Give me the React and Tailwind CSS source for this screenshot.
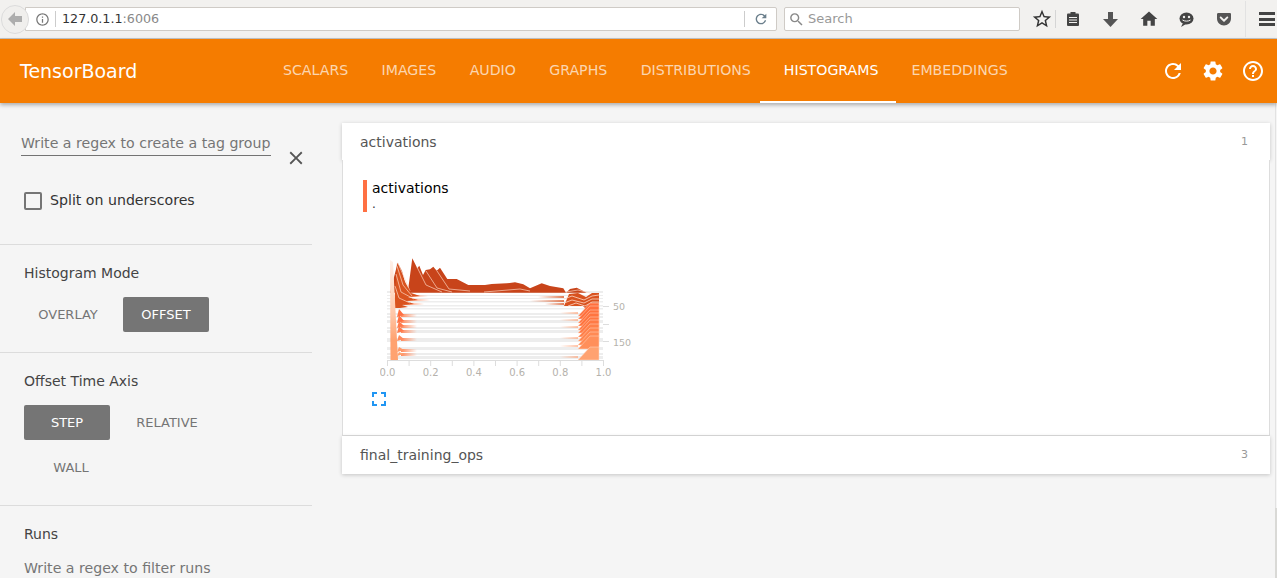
import { MdRefresh, MdSettings, MdHelpOutline, MdClose, MdFullscreen, MdSearch, MdInfoOutline, MdStarBorder, MdHome } from 'react-icons/md';
import { FaGetPocket } from 'react-icons/fa';

const FONT = 'font-["DejaVu_Sans",sans-serif]';

const tabs = [
  { name: 'SCALARS', cls: 'pl-[17px] pr-[16.7px]' },
  { name: 'IMAGES', cls: 'px-[16.7px]' },
  { name: 'AUDIO', cls: 'px-[16.7px]' },
  { name: 'GRAPHS', cls: 'px-[16.7px]' },
  { name: 'DISTRIBUTIONS', cls: 'pl-[16.7px] pr-[9px]' },
  { name: 'HISTOGRAMS', cls: 'pl-[24px] pr-[18px]' },
  { name: 'EMBEDDINGS', cls: 'pl-[15px] pr-[16.5px]' },
];

// grey stripes: [y, height]
const stripes = [
  [291, 2], [295, 1], [298, 1], [301, 1.5], [305, 1.5], [308, 1.5],
  [313, 2], [316, 2], [320, 3], [327, 2], [330, 3], [338, 4], [347, 3], [353, 2], [356, 3],
];

// left side lumps: [baseline, peak height, colour]
const leftRows = [
  [317, 8, '#ff7043'], [323, 8, '#ff7043'], [328, 7, '#ff7a4c'], [333, 7, '#ff7a4c'],
  [341, 6, '#ff8a5c'], [352, 5, '#ff9a6a'], [356, 4, '#ffa270'],
];

// right side blocks: [baseline, colour, has a faded tail]
const rightRows = [
  [316, '#ff6f3c', true], [319, '#ff6f3c', false], [323, '#ff723e', true], [326, '#ff743f', false],
  [330, '#ff7742', true], [333, '#ff7a45', false], [337, '#ff804a', false], [341, '#ff854f', true],
  [345, '#ff8a54', false], [349, '#ff8f5a', true], [360, '#ffa270', true],
];

function Chart() {
  return (
    <svg width="260" height="125" viewBox="380 255 260 125" className="block">
      <defs>
        <linearGradient id="wedge" x1="0" y1="0" x2="0" y2="1">
          <stop offset="0" stopColor="#fff1ea" />
          <stop offset="0.55" stopColor="#ffc5a6" />
          <stop offset="0.8" stopColor="#ffa270" />
          <stop offset="1" stopColor="#ffa270" />
        </linearGradient>
        <linearGradient id="fadeR" x1="0" y1="0" x2="1" y2="0">
          <stop offset="0" stopColor="#ff8a5c" />
          <stop offset="1" stopColor="#ff8a5c" stopOpacity="0" />
        </linearGradient>
        <linearGradient id="fadeL" x1="1" y1="0" x2="0" y2="0">
          <stop offset="0" stopColor="#ff9a6a" stopOpacity="0.6" />
          <stop offset="1" stopColor="#ff9a6a" stopOpacity="0" />
        </linearGradient>
        <linearGradient id="fadeDark" x1="1" y1="0" x2="0" y2="0">
          <stop offset="0" stopColor="#d8521f" stopOpacity="0.75" />
          <stop offset="1" stopColor="#d8521f" stopOpacity="0" />
        </linearGradient>
      </defs>

      {stripes.map(([y, h]) => (
        <rect key={y} x="387" y={y} width="216" height={h} fill="#ededed" />
      ))}

      {/* top series */}
      <path
        d="M390 292.7 L397.7 262.7 L402 271 L407.7 292.7 L412.3 258.3 L417.3 268.3 L419.3 265.7 L423 275 L425.7 270 L430 269.3 L433.3 266.7 L436.7 270.7 L440 267.7 L447.3 279 L456.7 279 L468.3 285 L485 285 L491.7 284 L506.7 283.3 L515 282.3 L523.3 284.3 L530 288.3 L541.7 283.3 L550 286 L563.3 288.3 L566 292.7 L570 289 L576.7 287.7 L586.7 292.7 Z"
        fill="#c8441a"
      />
      <g fill="none" stroke="#ffd9c7" strokeWidth="0.8" opacity="0.85">
        <path d="M397.7 262.7 L410 291" />
        <path d="M417 267 L426 285 L442 292" />
        <path d="M426 271 L437 288 L452 292" />
        <path d="M437 271 L449 289 L470 291" />
        <path d="M484 292 L520 289 L530 291" />
        <path d="M566 292 L578 290 L590 293" />
      </g>

      {/* dark rows on the left */}
      <rect x="404" y="295" width="24" height="2" fill="url(#fadeR)" />
      <rect x="404" y="299" width="26" height="2" fill="url(#fadeR)" />
      <rect x="404" y="303" width="20" height="2" fill="url(#fadeR)" />
      <path d="M394 308 L397 263 L404 280 L411 293 L420 296 L408 297 L418 300 L406 301 L414 304 L402 305 L408 307 L400 308 Z" fill="#d9531f" />
      <g fill="none" stroke="#ffd9c7" strokeWidth="0.8" opacity="0.85">
        <path d="M397 266 L403 285 L412 296" />
        <path d="M396 274 L401 292 L414 299" />
        <path d="M395 286 L399 298 L410 303" />
      </g>

      {/* dark rows on the right */}
      <rect x="538" y="296" width="26" height="2" fill="url(#fadeDark)" />
      <rect x="530" y="300" width="34" height="2" fill="url(#fadeDark)" />
      <rect x="545" y="303" width="19" height="2" fill="url(#fadeDark)" />
      <path d="M564 306 L569 294 L578 293 L586 297 L592 293 L599 293 L599 312 L589 312 L583 306 Z" fill="#d8521f" />
      <g fill="none" stroke="#ffd9c7" strokeWidth="0.8">
        <path d="M564 299 L572 296 L584 300 L592 296 L599 295" />
        <path d="M564 303 L572 300 L584 303 L592 299 L599 299" />
        <path d="M568 306 L576 303 L585 306 L592 302 L599 302" />
      </g>

      {/* offset rows */}
      {rightRows.map(([y, c, tail]) => (
        <g key={y}>
          {tail && <rect x="560" y={y - 4} width="18" height="2" fill="url(#fadeL)" />}
          <path d={`M578 ${y} L590 ${y - 13} L599 ${y - 13} L599 ${y} Z`} fill={c} stroke="#ffd9c7" strokeWidth="0.5" />
        </g>
      ))}
      {leftRows.map(([y, h, c]) => (
        <g key={y}>
          <rect x="401" y={y - 3} width="16" height="3" fill="url(#fadeR)" />
          <path d={`M397 ${y} L399 ${y - h} L404 ${y - 2} L397 ${y} Z`} fill={c} />
        </g>
      ))}

      {/* first-bin wedge */}
      <path d="M390 260 L393 262 L398 360 L390.5 360 Z" fill="url(#wedge)" />

      {/* axes */}
      <path d="M387 360.5 H603" fill="none" stroke="#dddddd" />
      {[0, 1, 2, 3, 4, 5].map((i) => (
        <g key={i}>
          <path d={`M${387.5 + i * 43.2} 360 v6`} stroke="#dddddd" />
          {i < 5 && <path d={`M${387.5 + i * 43.2 + 21.6} 360 v6`} stroke="#dddddd" />}
          <text x={387.5 + i * 43.2} y="376" textAnchor="middle" fontSize="10" fill="#b5b2ac" fontFamily="DejaVu Sans, sans-serif">
            {(i * 0.2).toFixed(1)}
          </text>
        </g>
      ))}
      <path d="M603 306.5 h6 M603 324.5 h6 M603 341.5 h6" stroke="#dddddd" />
      <text x="613" y="310" fontSize="9.5" fill="#b5b2ac" fontFamily="DejaVu Sans, sans-serif">50</text>
      <text x="613" y="346" fontSize="9.5" fill="#b5b2ac" fontFamily="DejaVu Sans, sans-serif">150</text>
    </svg>
  );
}

function BrowserBar() {
  return (
    <div className="flex h-[39px] shrink-0 items-center border-b border-[#c4c4c4] bg-[#f2f1ef]">
      <div className="z-10 -mr-[4px] ml-px flex h-[29px] w-[28px] items-center justify-center rounded-full border border-[#dcdcdc] bg-[#f0efed]">
        <svg width="16" height="14" viewBox="0 0 16 14">
          <path d="M8 0 L1 7 L8 14 L8 10 L15 10 L15 4 L8 4 Z" fill="#adadad" />
        </svg>
      </div>
      <div className="flex h-[24px] w-[752px] items-center rounded-r-[2px] border border-[#cfcbc6] bg-white pl-[9px]">
        <MdInfoOutline size={15} className="text-[#777]" />
        <span className="ml-[5px] mr-[6px] h-[16px] w-px bg-[#ccc]" />
        <span className="text-[12.7px] text-[#333]">127.0.1.1<span className="text-[#888]">:6006</span></span>
        <span className="ml-auto h-[16px] w-px bg-[#ccc]" />
        <span className="flex w-[31px] justify-center text-[#6b7f8c]"><MdRefresh size={16} /></span>
      </div>
      <div className="ml-[7px] flex h-[24px] w-[236px] items-center gap-[3px] rounded-[2px] border border-[#cfcbc6] bg-white pl-[3px]">
        <MdSearch size={17} className="text-[#888]" />
        <span className="text-[13px] text-[#999]">Search</span>
      </div>
      <MdStarBorder size={22} className="ml-[11px] text-[#333]" />
      <span className="ml-[2px] h-[18px] w-px bg-[#d5d5d5]" />
      <svg width="14" height="16" viewBox="0 0 14 16" className="ml-[10px]">
        <rect x="1" y="2.5" width="12" height="12.5" rx="1" fill="#444" />
        <rect x="4.5" y="1" width="5" height="3" fill="#444" />
        <path d="M3 6.5h8M3 9h8M3 11.5h8" stroke="#f2f1ef" />
      </svg>
      <svg width="15" height="15" viewBox="0 0 15 15" className="ml-[23px]">
        <path d="M5 0 H10 V7 H15 L7.5 15 L0 7 H5 Z" fill="#555" />
      </svg>
      <MdHome size={20} className="ml-[21px] text-[#444]" />
      <svg width="17" height="17" viewBox="0 0 17 17" className="ml-[19px]">
        <ellipse cx="8.5" cy="7.5" rx="7" ry="6" fill="#444" />
        <path d="M5 12l-2 4 5-3z" fill="#444" />
        <circle cx="6" cy="6" r="1.2" fill="#f2f1ef" />
        <circle cx="11" cy="6" r="1.2" fill="#f2f1ef" />
        <path d="M4.5 9c2 1.5 6 1.5 8 0" stroke="#f2f1ef" fill="none" />
      </svg>
      <FaGetPocket size={16} className="ml-[21px] text-[#555]" />
      <span className="ml-[13px] h-[36px] w-px bg-[#e2e2e2]" />
      <div className="ml-[13px] flex w-[16px] flex-col gap-[2.5px]">
        <span className="h-[3px] bg-[#444]" />
        <span className="h-[3px] bg-[#444]" />
        <span className="h-[3px] bg-[#444]" />
      </div>
    </div>
  );
}

function Header() {
  return (
    <div className="relative z-10 flex h-[64px] shrink-0 items-center bg-[#f57c00] pl-[20px] shadow-[0_2px_4px_rgba(0,0,0,0.3)]">
      <div className="w-[246px] text-[19px] text-white">TensorBoard</div>
      <div className="flex h-full">
        {tabs.map((t) => (
          <div
            key={t.name}
            className={`flex h-full items-center border-b-2 pt-[1px] text-[14.15px] ${t.cls} ${
              t.name === 'HISTOGRAMS' ? 'border-white text-white' : 'border-transparent text-white/70'
            }`}
          >
            {t.name}
          </div>
        ))}
      </div>
      <div className="ml-auto flex items-center gap-[16px] pr-[12px] text-white">
        <MdRefresh size={24} />
        <MdSettings size={24} />
        <MdHelpOutline size={24} />
      </div>
    </div>
  );
}

function ModeButton({ active, className, children }) {
  return (
    <div
      className={`flex h-[35px] items-center justify-center rounded-[2px] text-[13px] ${
        active ? 'bg-[#757575] text-white' : 'text-[#757575]'
      } ${className}`}
    >
      {children}
    </div>
  );
}

function Sidebar() {
  return (
    <div className="w-[312px] shrink-0">
      <div className="h-[142px] border-b border-[#dcdcdc] pl-[21px] pt-[30px]">
        <div className="flex items-start">
          <div className="w-[250px] border-b border-[#737373] pb-[1px] text-[14.15px] whitespace-nowrap text-[#757575]">
            Write a regex to create a tag group
          </div>
          <MdClose size={22} className="ml-[14px] mt-[14px] text-[#555]" />
        </div>
        <div className="mt-[21px] ml-[3px] flex items-center gap-[8px]">
          <span className="h-[18px] w-[18px] rounded-[2px] border-2 border-[#757575]" />
          <span className="text-[14.15px] text-[#333]">Split on underscores</span>
        </div>
      </div>
      <div className="h-[108px] border-b border-[#dcdcdc] pl-[24px] pt-[20px]">
        <div className="text-[14px] leading-[17px] text-[#444]">Histogram Mode</div>
        <div className="mt-[15px] flex">
          <ModeButton className="w-[88px]">OVERLAY</ModeButton>
          <ModeButton active className="ml-[11px] w-[86px]">OFFSET</ModeButton>
        </div>
      </div>
      <div className="h-[153px] border-b border-[#dcdcdc] pl-[24px] pt-[20px]">
        <div className="text-[14px] leading-[17px] text-[#444]">Offset Time Axis</div>
        <div className="mt-[15px] flex w-[200px] flex-wrap">
          <ModeButton active className="w-[86px]">STEP</ModeButton>
          <ModeButton className="ml-[14px] w-[86px]">RELATIVE</ModeButton>
          <ModeButton className="mt-[10px] w-[94px]">WALL</ModeButton>
        </div>
      </div>
      <div className="pl-[24px] pt-[20px]">
        <div className="text-[14px] leading-[17px] text-[#444]">Runs</div>
        <div className="mt-[15px] text-[14.15px] whitespace-nowrap text-[#757575]">Write a regex to filter runs</div>
      </div>
    </div>
  );
}

function CategoryHeader({ name, count, className }) {
  return (
    <div className={`flex items-center justify-between bg-white pl-[18px] pr-[22px] shadow-[0_1px_4px_rgba(0,0,0,0.2)] ${className}`}>
      <span className="text-[14px] text-[#555]">{name}</span>
      <span className="text-[11px] text-[#999]">{count}</span>
    </div>
  );
}

export default function App() {
  return (
    <div className={`flex h-[578px] w-full flex-col overflow-hidden bg-[#f5f5f5] ${FONT}`}>
      <BrowserBar />
      <Header />
      <div className="flex min-h-0 flex-1">
        <Sidebar />
        <div className="ml-[30px] mt-[20px] w-[928px]">
          <CategoryHeader name="activations" count="1" className="h-[37px] pt-[1px]" />
          <div className="h-[276px] border-x border-b border-[#ddd] bg-white pl-[20px] pt-[20px]">
            <div className="flex h-[32px] gap-[5px]">
              <span className="w-[4px] bg-[#ff7043]" />
              <div>
                <div className="text-[14px] leading-[16px] text-black">activations</div>
                <div className="text-[12px] leading-[16px] text-[#333]">.</div>
              </div>
            </div>
            <div className="mt-[43px] ml-[17px]">
              <Chart />
            </div>
            <MdFullscreen size={24} className="ml-[4px] mt-[7px] text-[#2196f3]" />
          </div>
          <CategoryHeader name="final_training_ops" count="3" className="h-[38px] pt-[1px]" />
        </div>
        {/* scrollbar sliver on the right edge */}
        <div className="ml-auto flex w-[2px] flex-col">
          <div className="h-[405px] border-l border-[#e2e2e2]" />
          <div className="flex-1 bg-[#d9d9d6]" />
        </div>
      </div>
    </div>
  );
}
